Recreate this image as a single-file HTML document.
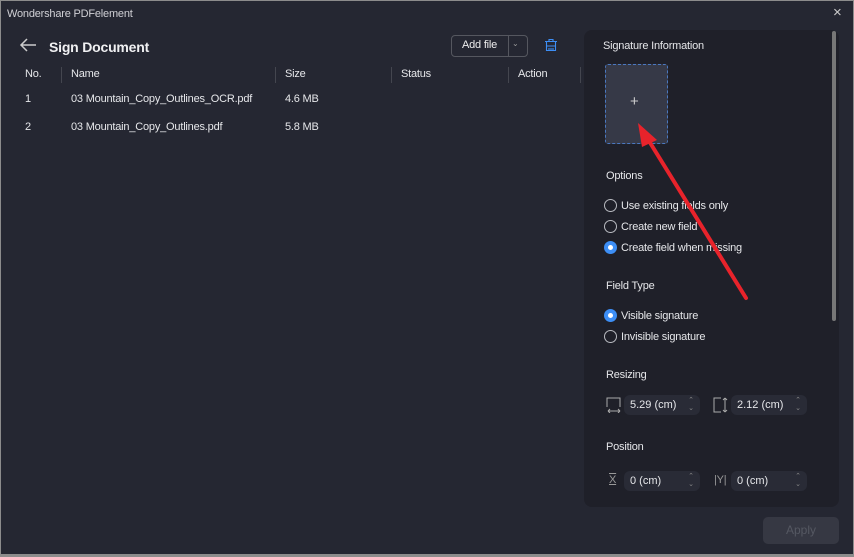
<!DOCTYPE html><html><head><style>
body{margin:0;width:854px;height:556px;overflow:hidden;background:#8c8c8c;font-family:"Liberation Sans",sans-serif;color:#e6e7ea}
.win{position:absolute;left:1px;top:1px;width:852px;height:553px;background:#252732}
.t{position:absolute;font-size:11px;white-space:nowrap;letter-spacing:-0.2px}
.panel{position:absolute;left:583px;top:29px;width:255px;height:477px;background:#1f2029;border-radius:8px}
.radio{position:absolute;width:11px;height:11px;border:1.3px solid #b8bac0;border-radius:50%}
.radio.on{border-color:#3d8ef5;background:#3d8ef5}
.radio.on:after{content:"";position:absolute;left:3px;top:3px;width:5px;height:5px;background:#fff;border-radius:50%}
.inp{position:absolute;width:76px;height:20px;background:#292b36;border-radius:6px;font-size:11px;line-height:20px;padding-left:6px;box-sizing:border-box}
.inp:after{content:"⌃\A⌄";white-space:pre;position:absolute;right:6px;top:2px;font-size:7px;line-height:8px;color:#888}
.sep{position:absolute;top:66px;width:1px;height:16px;background:#44464f}
</style></head><body><div class="win">
<div class="t" style="left:6px;top:7px;color:#d0d0d5">Wondershare PDFelement</div>
<div class="t" style="left:832px;top:3px;font-size:15px;color:#ccc">×</div>
<svg style="position:absolute;left:18px;top:37px" width="18" height="14"><path d="M17 7H2M8 1L2 7l6 6" stroke="#ccc" stroke-width="1.5" fill="none"/></svg>
<div class="t" style="left:48px;top:38px;font-size:14px;font-weight:bold;color:#f0f0f2">Sign Document</div>
<div style="position:absolute;left:450px;top:34px;width:75px;height:20px;border:1px solid #55575f;border-radius:4px"></div>
<div style="position:absolute;left:507px;top:35px;width:1px;height:20px;background:#55575f"></div>
<div class="t" style="left:461px;top:38px;color:#eee">Add file</div>
<div class="t" style="left:511px;top:38px;font-size:8px;color:#999">⌄</div>
<svg style="position:absolute;left:543px;top:37px" width="14" height="14"><path d="M1 3.5h12M5 3.5V1.5h4v2M2.5 3.5v9h9v-9M2.5 8h9M5 10v2.5M7 10v2.5M9 10v2.5" stroke="#3d8ef5" stroke-width="1.1" fill="none"/></svg>
<div class="t" style="left:24px;top:67px">No.</div><div class="sep" style="left:60px"></div>
<div class="t" style="left:70px;top:67px">Name</div><div class="sep" style="left:274px"></div>
<div class="t" style="left:284px;top:67px">Size</div><div class="sep" style="left:390px"></div>
<div class="t" style="left:400px;top:67px">Status</div><div class="sep" style="left:507px"></div>
<div class="t" style="left:517px;top:67px">Action</div><div class="sep" style="left:579px"></div>
<div class="t" style="left:24px;top:92px">1</div><div class="t" style="left:70px;top:92px">03 Mountain_Copy_Outlines_OCR.pdf</div><div class="t" style="left:284px;top:92px">4.6 MB</div>
<div class="t" style="left:24px;top:120px">2</div><div class="t" style="left:70px;top:120px">03 Mountain_Copy_Outlines.pdf</div><div class="t" style="left:284px;top:120px">5.8 MB</div>
<div class="panel"></div>
<div style="position:absolute;left:831px;top:30px;width:4px;height:290px;background:#777;border-radius:2px"></div>
<div class="t" style="left:602px;top:39px">Signature Information</div>
<div style="position:absolute;left:604px;top:63px;width:61px;height:78px;background:#363947;border:1px dashed #4a78c0;border-radius:3px"></div>
<div class="t" style="left:629px;top:92px;font-size:15px;color:#ccc">+</div>
<div class="t" style="left:605px;top:169px">Options</div>
<div class="radio" style="left:603px;top:198px"></div><div class="t" style="left:620px;top:199px">Use existing fields only</div>
<div class="radio" style="left:603px;top:219px"></div><div class="t" style="left:620px;top:220px">Create new field</div>
<div class="radio on" style="left:603px;top:240px"></div><div class="t" style="left:620px;top:241px">Create field when missing</div>
<div class="t" style="left:605px;top:279px">Field Type</div>
<div class="radio on" style="left:603px;top:308px"></div><div class="t" style="left:620px;top:309px">Visible signature</div>
<div class="radio" style="left:603px;top:329px"></div><div class="t" style="left:620px;top:330px">Invisible signature</div>
<div class="t" style="left:605px;top:368px">Resizing</div>
<svg style="position:absolute;left:605px;top:396px" width="16" height="16"><path d="M1 10V1h13v9M2 14h12M2 14l2-2M2 14l2 2M14 14l-2-2M14 14l-2 2" stroke="#aaa" fill="none"/></svg>
<div class="inp" style="left:623px;top:394px">5.29 (cm)</div>
<svg style="position:absolute;left:712px;top:396px" width="16" height="16"><path d="M8 1H1v14h7M12 1v14M12 1l-2 2M12 1l2 2M12 15l-2-2M12 15l2-2" stroke="#aaa" fill="none"/></svg>
<div class="inp" style="left:730px;top:394px">2.12 (cm)</div>
<div class="t" style="left:605px;top:440px">Position</div>
<div class="t" style="left:608px;top:473px;color:#999;text-decoration:underline overline">X</div>
<div class="inp" style="left:623px;top:470px">0 (cm)</div>
<div class="t" style="left:713px;top:473px;color:#999">|Y|</div>
<div class="inp" style="left:730px;top:470px">0 (cm)</div>
<div style="position:absolute;left:762px;top:516px;width:76px;height:27px;background:#363843;border-radius:5px;color:#555862;font-size:12px;text-align:center;line-height:27px">Apply</div>
<svg style="position:absolute;left:0;top:0" width="854" height="556"><line x1="745" y1="297" x2="648" y2="140" stroke="#e8232b" stroke-width="4" stroke-linecap="round"/><path d="M637 122L656 139L641 146Z" fill="#e8232b"/></svg>
</div></body></html>
